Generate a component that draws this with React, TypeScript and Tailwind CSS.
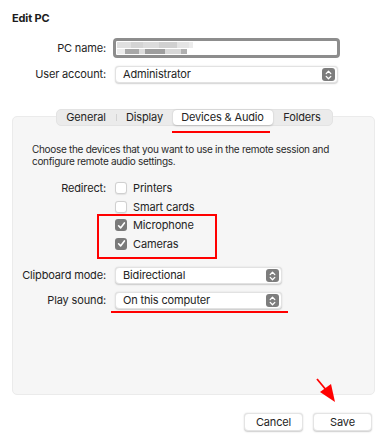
import React from "react";

const Stepper = () => (
  <div className="w-[13px] h-[13px] rounded-[3px] bg-[#7d7d7d] flex items-center justify-center">
    <svg width="7" height="10" viewBox="0 0 7 10" fill="none" stroke="white" strokeWidth="1.3" strokeLinecap="round" strokeLinejoin="round">
      <path d="M1.2 3.6 L3.5 1.3 L5.8 3.6" />
      <path d="M1.2 6.4 L3.5 8.7 L5.8 6.4" />
    </svg>
  </div>
);

const Select = ({ label, w, h }: { label: string; w: string; h: string }) => (
  <div
    className={`${w} ${h} bg-white rounded-[4px] border border-[#e2e2e2] shadow-[0_0.5px_1.5px_rgba(0,0,0,0.18)] flex items-center justify-between pl-[7px] pr-[2px]`}
  >
    <span>{label}</span>
    <Stepper />
  </div>
);

const Check = ({ checked, label }: { checked?: boolean; label: string }) => (
  <div className="flex items-center h-[18.5px]">
    {checked ? (
      <div className="w-[12px] h-[12px] rounded-[3px] bg-[#7a7a7a] flex items-center justify-center">
        <svg width="9" height="9" viewBox="0 0 9 9" fill="none" stroke="white" strokeWidth="1.6" strokeLinecap="round" strokeLinejoin="round">
          <path d="M1.6 4.8 L3.6 6.9 L7.4 1.9" />
        </svg>
      </div>
    ) : (
      <div className="w-[12px] h-[12px] rounded-[3px] bg-white border border-[#d0d0d0] shadow-[0_0.5px_1px_rgba(0,0,0,0.08)]" />
    )}
    <span className="ml-[6px]">{label}</span>
  </div>
);

export default function App() {
  return (
    <div className="relative w-[387px] h-[437px] bg-white font-['Inter',sans-serif] text-[11px] tracking-[-0.15px] text-[#242424] overflow-hidden">
      <div className="pt-[11px] pl-[12px] h-[25px] leading-[14px] font-bold text-[11px] text-[#1c1c1c]">Edit PC</div>

      {/* PC name */}
      <div className="flex items-center mt-[13px] h-[20px]">
        <div className="w-[106px] text-right">PC name:</div>
        <div className="ml-[7px] w-[227px] h-[20px] rounded-[4px] border-[3px] border-[#8d8d8d] bg-white flex items-center pl-[1px] overflow-hidden">
          <div className="flex flex-col gap-[1px] blur-[0.6px]">
            <div className="flex">
              <div className="w-[14px] h-[6px] bg-[#e0e0e0]" />
              <div className="w-[12px] h-[6px] bg-[#d4d4d4]" />
              <div className="w-[16px] h-[6px] bg-[#dcdcdc]" />
              <div className="w-[18px] h-[6px] bg-[#d0d0d0]" />
              <div className="w-[12px] h-[6px] bg-[#e4e4e4]" />
              <div className="w-[4px] h-[6px] bg-[#ececec]" />
            </div>
            <div className="flex">
              <div className="w-[8px] h-[5px] bg-[#ececec]" />
              <div className="w-[14px] h-[5px] bg-[#a8a8a8]" />
              <div className="w-[6px] h-[5px] bg-[#dcdcdc]" />
              <div className="w-[20px] h-[5px] bg-[#9e9e9e]" />
              <div className="w-[16px] h-[5px] bg-[#d8d8d8]" />
              <div className="w-[6px] h-[5px] bg-[#b0b0b0]" />
            </div>
          </div>
        </div>
      </div>

      {/* User account */}
      <div className="flex items-center mt-[8px] h-[17px]">
        <div className="w-[106px] text-right">User account:</div>
        <div className="ml-[9px]">
          <Select label="Administrator" w="w-[223px]" h="h-[17px]" />
        </div>
      </div>

      {/* Tabs */}
      <div className="relative z-10 mt-[26px] flex justify-center pl-[1px]">
        <div className="flex h-[17px] rounded-[5px] bg-[#ebebeb] border border-[#e3e3e3] items-stretch">
          <div className="w-[59px] flex items-center justify-center">General</div>
          <div className="w-px my-[4px] bg-[#d2d2d2]" />
          <div className="w-[56px] flex items-center justify-center">Display</div>
          <div className="w-[100px] flex items-center justify-center bg-white rounded-[4px] shadow-[0_0.5px_2px_rgba(0,0,0,0.2)]">Devices &amp; Audio</div>
          <div className="w-[59px] flex items-center justify-center">Folders</div>
        </div>
      </div>

      {/* Panel */}
      <div className="-mt-[10px] mx-[12px] h-[279px] bg-[#f6f6f6] border border-[#ebebeb] rounded-[5px]">
        <div className="pt-[26px] pl-[19px] text-[10px] tracking-[-0.3px] leading-[12px] text-[#2a2a2a]">
          <div>Choose the devices that you want to use in the remote session and</div>
          <div>configure remote audio settings.</div>
        </div>

        <div className="flex mt-[12px]">
          <div className="w-[93px] text-right h-[18.5px] flex items-center justify-end">Redirect:</div>
          <div className="ml-[9px] flex flex-col">
            <Check label="Printers" />
            <Check label="Smart cards" />
            <Check checked label="Microphone" />
            <Check checked label="Cameras" />
          </div>
        </div>

        <div className="flex items-center mt-[14px] h-[17px]">
          <div className="w-[93px] text-right">Clipboard mode:</div>
          <div className="ml-[9px]">
            <Select label="Bidirectional" w="w-[167px]" h="h-[17px]" />
          </div>
        </div>

        <div className="flex items-center mt-[8px] h-[17px]">
          <div className="w-[93px] text-right">Play sound:</div>
          <div className="ml-[9px]">
            <Select label="On this computer" w="w-[167px]" h="h-[17px]" />
          </div>
        </div>
      </div>

      {/* Buttons */}
      <div className="flex justify-end gap-[10px] mt-[18px] mr-[15px]">
        <div className="w-[59px] h-[18px] bg-white rounded-[4px] border border-[#e4e4e4] shadow-[0_0.5px_1.5px_rgba(0,0,0,0.2)] flex items-center justify-center">Cancel</div>
        <div className="w-[59px] h-[18px] bg-white rounded-[4px] border border-[#e4e4e4] shadow-[0_0.5px_1.5px_rgba(0,0,0,0.2)] flex items-center justify-center">Save</div>
      </div>

      {/* Annotations */}
      <div className="absolute left-[172px] top-[131px] w-[98px] h-[2px] bg-[#ff0000]" />
      <div className="absolute left-[97px] top-[214px] w-[120px] h-[45px] border-2 border-[#ff0000]" />
      <div className="absolute left-[111px] top-[311px] w-[177px] h-[2px] bg-[#ff0000]" />
      <svg className="absolute left-0 top-0" width="387" height="437" viewBox="0 0 387 437">
        <line x1="317" y1="379" x2="327" y2="391" stroke="#ff0000" strokeWidth="1.8" />
        <polygon points="335,402 320,392 331,384" fill="#ff0000" />
      </svg>
    </div>
  );
}
